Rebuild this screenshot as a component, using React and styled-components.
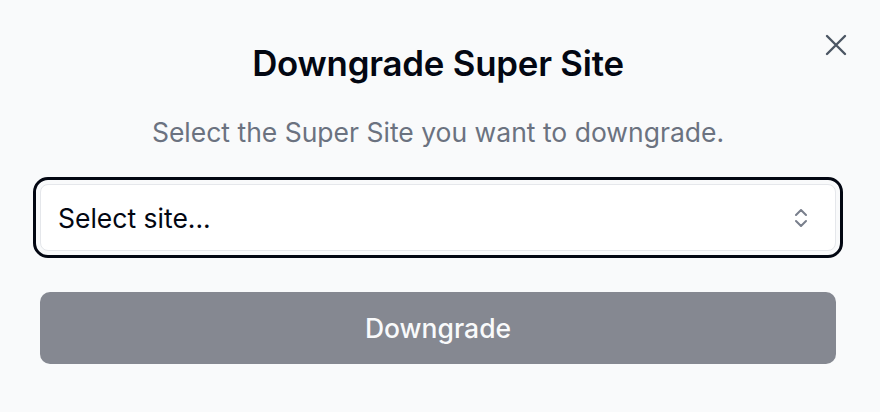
import React from "react";
import styled, { createGlobalStyle } from "styled-components";

const Global = createGlobalStyle`
  html, body {
    margin: 0;
    padding: 0;
    background: #f9fafb;
    font-family: Inter, "Noto Sans", sans-serif;
    color: #030712;
  }
  * { box-sizing: border-box; }
`;

const Dialog = styled.div`
  position: relative;
  width: 880px;
  height: 412px;
  padding: 41px 44px 0 40px;
  display: flex;
  flex-direction: column;
`;

const CloseButton = styled.button`
  position: absolute;
  top: 31px;
  right: 30px;
  width: 28px;
  height: 28px;
  padding: 0;
  border: none;
  background: none;
  color: #4b5563;
  display: flex;
  align-items: center;
  justify-content: center;
  cursor: pointer;
`;

const Title = styled.h2`
  margin: 0;
  text-align: center;
  font-size: 34.8px;
  line-height: 44px;
  font-weight: 600;
  letter-spacing: -0.2px;
  color: #030712;
`;

const Subtitle = styled.p`
  margin: 29px 0 0;
  text-align: center;
  font-size: 26.5px;
  line-height: 36px;
  font-weight: 400;
  color: #6b7280;
`;

const SelectBox = styled.button`
  margin: 34px 0 0;
  width: 796px;
  height: 67px;
  padding: 0 22px 0 17px;
  display: flex;
  align-items: center;
  justify-content: space-between;
  background: #ffffff;
  border: 1px solid #e5e7eb;
  border-radius: 8px;
  outline: 3px solid #030712;
  outline-offset: 4px;
  font-family: inherit;
  font-size: 26.5px;
  color: #030712;
  cursor: pointer;
`;

const Chevrons = styled.span`
  display: flex;
  color: #6b7280;
  opacity: 0.9;
`;

const SubmitButton = styled.button`
  margin: 41px 0 0;
  width: 796px;
  height: 72px;
  border: none;
  border-radius: 10px;
  background: #858891;
  color: #f9fafb;
  font-family: inherit;
  font-size: 26.5px;
  font-weight: 500;
  cursor: not-allowed;
`;

export default function App() {
  return (
    <>
      <Global />
      <Dialog>
        <CloseButton aria-label="Close">
          <svg width="22" height="22" viewBox="0 0 22 22" fill="none" stroke="currentColor" strokeWidth="2.4" strokeLinecap="round">
            <path d="M2 2 L20 20 M20 2 L2 20" />
          </svg>
        </CloseButton>
        <Title>Downgrade Super Site</Title>
        <Subtitle>Select the Super Site you want to downgrade.</Subtitle>
        <SelectBox>
          <span>Select site...</span>
          <Chevrons>
            <svg width="24" height="24" viewBox="0 0 24 24" fill="none" stroke="currentColor" strokeWidth="2" strokeLinecap="round" strokeLinejoin="round">
              <path d="m7 15 5 5 5-5" />
              <path d="m7 9 5-5 5 5" />
            </svg>
          </Chevrons>
        </SelectBox>
        <SubmitButton disabled>Downgrade</SubmitButton>
      </Dialog>
    </>
  );
}
